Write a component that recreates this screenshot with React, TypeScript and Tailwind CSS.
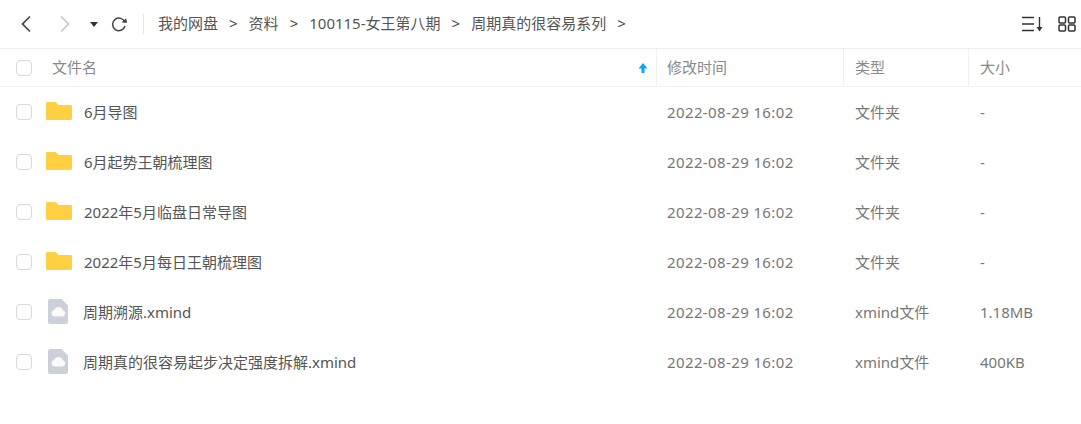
const font = { fontFamily: '"Noto Sans", "Noto Sans CJK SC", sans-serif' };

function Folder() {
  return (
    <svg width="26" height="18" viewBox="0 0 26 18" className="shrink-0 block">
      <path d="M0 1.500C0 .6.6 0 1.500 0h7.200c.7 0 1.300.3 1.800.8L12.500 3h12C25.400 3 26 3.600 26 4.500v12C26 17.400 25.400 18 24.500 18h-23C.6 18 0 17.400 0 16.500z" fill="#ffd042" />
    </svg>
  );
}

function FileIcon() {
  return (
    <svg width="20" height="25" viewBox="0 0 20 25" className="shrink-0 block">
      <path d="M2 0h11.500L20 6.500V23a2 2 0 0 1-2 2H2a2 2 0 0 1-2-2V2a2 2 0 0 1 2-2z" fill="#ccd0d8" />
      <path d="M6.800 17.500a3.300 3.300 0 0 1-.7-6.500 4.600 4.600 0 0 1 8.700.2 3.200 3.200 0 0 1-.4 6.300z" fill="#fafafa" />
    </svg>
  );
}

function Check() {
  return <div className="w-4 h-4 shrink-0 rounded-[4px] border border-[#d9d9d9] bg-white" />;
}

const rows = [
  { name: '6月导图', type: '文件夹', size: '-', folder: true },
  { name: '6月起势王朝梳理图', type: '文件夹', size: '-', folder: true },
  { name: '2022年5月临盘日常导图', type: '文件夹', size: '-', folder: true },
  { name: '2022年5月每日王朝梳理图', type: '文件夹', size: '-', folder: true },
  { name: '周期溯源.xmind', type: 'xmind文件', size: '1.18MB', folder: false },
  { name: '周期真的很容易起步决定强度拆解.xmind', type: 'xmind文件', size: '400KB', folder: false },
];

const crumbs = ['我的网盘', '资料', '100115-女王第八期', '周期真的很容易系列'];

export default function App() {
  return (
    <div style={font} className="w-[1081px] h-[424px] bg-white text-[15px] leading-[20px] text-[#5c5c5c] overflow-hidden">
      <div className="h-[49px] flex items-center border-b border-[#eeeeee]">
        <svg width="14" height="18" viewBox="0 0 14 18" className="ml-[19px]" fill="none" stroke="#444" strokeWidth="1.7">
          <path d="M11 1.500L3.500 9l7.500 7.500" />
        </svg>
        <svg width="14" height="18" viewBox="0 0 14 18" className="ml-[25px]" fill="none" stroke="#c4c4c4" strokeWidth="1.5">
          <path d="M3 1.500L10.500 9 3 16.500" />
        </svg>
        <svg width="8" height="5" viewBox="0 0 8 5" className="ml-[18px]">
          <path d="M0 0h8L4 5z" fill="#333" />
        </svg>
        <svg width="18" height="18" viewBox="0 0 18 18" className="ml-[12px]" fill="none">
          <path d="M14.900 7.400A6.300 6.300 0 1 0 15 11" stroke="#444" strokeWidth="1.5" />
          <path d="M11.600 7.600l5.600.2-1.200-4.600z" fill="#444" />
        </svg>
        <div className="w-px h-5 bg-[#e6e6e6] ml-[15px]" />
        <div className="flex items-center ml-[14px] text-[#555] -mt-[2px]">
          {crumbs.map((c) => (
            <div key={c} className="flex items-center">
              <span>{c}</span>
              <span className="mx-[11px] text-[#444]">&gt;</span>
            </div>
          ))}
        </div>
        <div className="ml-auto flex items-center gap-[14px] mr-[5px]">
          <svg width="22" height="16" viewBox="0 0 22 16" fill="none" stroke="#333" strokeWidth="1.4">
            <path d="M0 1.500h12M0 8h12M0 14.500h12" />
            <path d="M17.500 1v12.500" />
            <path d="M14.500 11h6l-3 4.500z" fill="#333" stroke="none" />
          </svg>
          <svg width="18" height="16" viewBox="0 0 18 16" fill="none" stroke="#333" strokeWidth="1.5">
            <rect x="1" y="1" width="6.500" height="6" rx="1" />
            <rect x="10.500" y="1" width="6.500" height="6" rx="1" />
            <rect x="1" y="9" width="6.500" height="6" rx="1" />
            <rect x="10.500" y="9" width="6.500" height="6" rx="1" />
          </svg>
        </div>
      </div>

      <div className="h-[38px] flex items-center border-b border-[#f2f2f2] text-[#8a8a8a]">
        <div className="w-[657px] h-full flex items-center border-r border-[#f0f0f0] pl-[16px] pr-[8px]">
          <Check />
          <span className="ml-[20px] -mt-[1px]">文件名</span>
          <svg width="10" height="12" viewBox="0 0 10 12" className="ml-auto">
            <path d="M5 1L9.500 6.500H6.500V11h-3V6.500H.5z" fill="#06a7ff" />
          </svg>
        </div>
        <div className="w-[187px] h-full flex items-center border-r border-[#f0f0f0] pl-[10px] pb-[1px]">修改时间</div>
        <div className="w-[125px] h-full flex items-center border-r border-[#f0f0f0] pl-[11px] pb-[1px]">类型</div>
        <div className="flex-1 h-full flex items-center pl-[11px] pb-[1px]">大小</div>
      </div>

      <div>
        {rows.map((r) => (
          <div key={r.name} className="h-[50px] flex items-center">
            <div className="w-[657px] flex items-center pl-[16px]">
              <Check />
              {r.folder ? (
                <div className="ml-[14px] mr-[12px] -mt-[2px]"><Folder /></div>
              ) : (
                <div className="ml-[16px] mr-[15px] -mt-[1px]"><FileIcon /></div>
              )}
              <span className="text-[#555] -mt-[1px]">{r.name}</span>
            </div>
            <div className="w-[187px] pl-[10px] text-[#777] tracking-[0.38px] -mt-[1px]">2022-08-29 16:02</div>
            <div className="w-[125px] pl-[11px] text-[#777] -mt-[1px]">{r.type}</div>
            <div className="flex-1 pl-[11px] text-[#777] -mt-[1px]">{r.size}</div>
          </div>
        ))}
      </div>
    </div>
  );
}
